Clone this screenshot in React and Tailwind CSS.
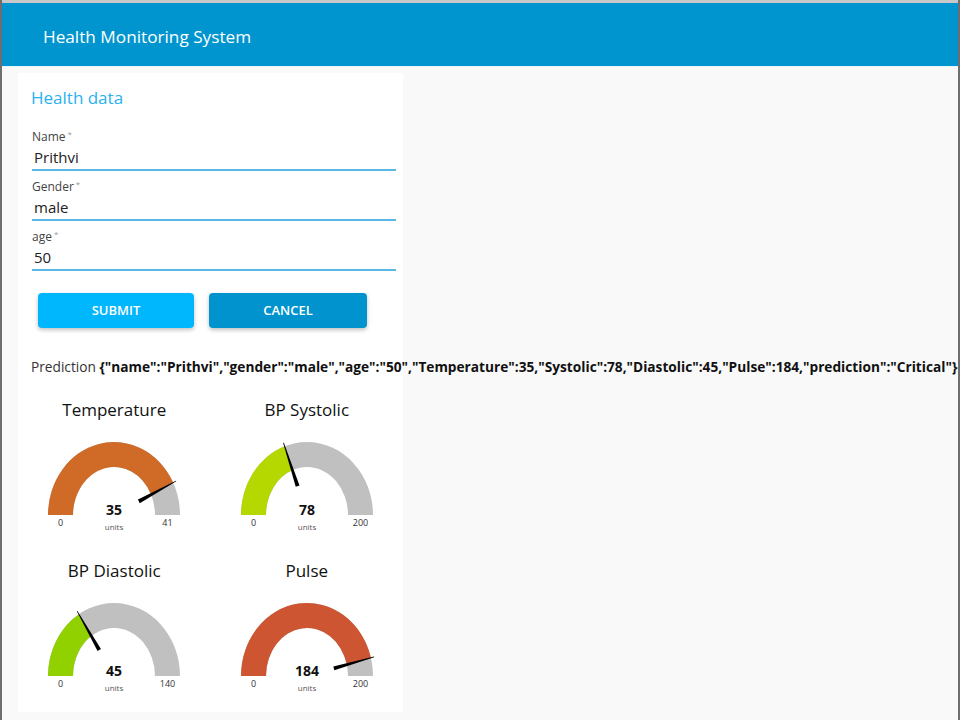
import React from 'react';

const font = { fontFamily: '"Open Sans", "Noto Sans", sans-serif' };

function pt(cx, cy, rx, ry, a) {
    return [cx + rx * Math.cos(a), cy - ry * Math.sin(a)];
}

function arcPath(cx, cy, R, r, from, to) {
    // from/to in radians, going clockwise on screen from left (PI) towards right (0)
    const [x1, y1] = pt(cx, cy, R.x, R.y, from);
    const [x2, y2] = pt(cx, cy, R.x, R.y, to);
    const [x3, y3] = pt(cx, cy, r.x, r.y, to);
    const [x4, y4] = pt(cx, cy, r.x, r.y, from);
    return `M${x1} ${y1} A${R.x} ${R.y} 0 0 1 ${x2} ${y2} L${x3} ${y3} A${r.x} ${r.y} 0 0 0 ${x4} ${y4} Z`;
}

function Gauge({ title, value, max, color }) {
    const cx = 97;
    const cy = 93;
    const R = { x: 66, y: 73 };
    const r = { x: 41, y: 48 };
    const a = Math.PI * (1 - value / max);

    // needle
    const base = pt(cx, cy, R.x * 0.42, R.y * 0.42, a);
    const tip = pt(cx, cy, R.x * 1.05, R.y * 1.05, a);
    const nx = -Math.sin(a);
    const ny = -Math.cos(a);
    const needle = [
        [base[0] + nx * 2, base[1] + ny * 2],
        [tip[0] + nx * 0.4, tip[1] + ny * 0.4],
        [tip[0] - nx * 0.4, tip[1] - ny * 0.4],
        [base[0] - nx * 2, base[1] - ny * 2],
    ].map(p => p.join(',')).join(' ');

    return (
        <div className="flex flex-col items-center">
            <div className="h-6 leading-6 text-[17px] text-[#111]">{title}</div>
            <svg width="194" height="120" viewBox="0 0 194 120">
                <path d={arcPath(cx, cy, R, r, Math.PI, 0)} fill="#c0c0c0" />
                <path d={arcPath(cx, cy, R, r, Math.PI, a)} fill={color} />
                <polygon points={needle} fill="#000" />
                <text x={cx} y="93" textAnchor="middle" fontSize="14" fontWeight="700" fill="#111" style={font}>{value}</text>
                <text x={cx} y="108" textAnchor="middle" fontSize="8" fill="#555" style={font}>units</text>
                <text x={cx - 53.5} y="104" textAnchor="middle" fontSize="9" fill="#333" style={font}>0</text>
                <text x={cx + 53.5} y="104" textAnchor="middle" fontSize="9" fill="#333" style={font}>{max}</text>
            </svg>
        </div>
    );
}

function Field({ label, value }) {
    return (
        <div className="flex flex-col">
            <div className="h-4 leading-4 text-[12px] text-[#444]">
                {label}<sup className="ml-0.5 text-[8px] text-[#999]">*</sup>
            </div>
            <div className="h-6 leading-6 text-[15px] text-[#222] pl-0.5">{value}</div>
            <div className="h-[2px] bg-[#5bb8e4]" />
        </div>
    );
}

export default function App() {
    const prediction = {
        name: 'Prithvi',
        gender: 'male',
        age: '50',
        Temperature: 35,
        Systolic: 78,
        Diastolic: 45,
        Pulse: 184,
        prediction: 'Critical',
    };

    return (
        <div className="w-[960px] h-[720px] overflow-hidden bg-[#f9f9f9] border-l-2 border-r-2 border-[#6e6e6e] flex flex-col" style={font}>
            <div className="h-[3px] bg-[#c8c8c8]" />
            <header className="h-16 bg-[#0095cf] flex items-center pl-[41px] pt-[5px] border-b border-[#e6f4fb]">
                <h1 className="text-white text-[17.2px]">Health Monitoring System</h1>
            </header>

            <div className="pt-[6px] pl-4">
                <div className="w-[385px] h-[639px] bg-white pt-[13px] pb-[9px]">
                    <h2 className="pl-[13px] h-6 leading-6 text-[17px] text-[#29b2ef]">Health data</h2>

                    <div className="mt-[19px] ml-[14px] mr-[7px] flex flex-col gap-2">
                        <Field label="Name" value="Prithvi" />
                        <Field label="Gender" value="male" />
                        <Field label="age" value="50" />
                    </div>

                    <div className="mt-[22px] ml-5 flex gap-[15px]">
                        <button className="w-[156px] h-[35px] bg-[#00b6fd] text-white text-[13px] font-semibold rounded-sm shadow-[0_2px_4px_rgba(0,0,0,0.25)]">
                            SUBMIT
                        </button>
                        <button className="w-[158px] h-[35px] bg-[#0093cd] text-white text-[13px] font-semibold rounded-sm shadow-[0_2px_4px_rgba(0,0,0,0.25)]">
                            CANCEL
                        </button>
                    </div>

                    <div className="mt-[29px] pl-[13px] h-5 leading-5 text-[13.7px] whitespace-nowrap">
                        <span className="text-[#333]">Prediction </span>
                        <span className="font-bold text-[#111]">{JSON.stringify(prediction)}</span>
                    </div>

                    <div className="mt-[21px] grid grid-cols-2 gap-y-[17px]">
                        <Gauge title="Temperature" value={35} max={41} color="#d06a27" />
                        <Gauge title="BP Systolic" value={78} max={200} color="#b4d800" />
                        <Gauge title="BP Diastolic" value={45} max={140} color="#92d100" />
                        <Gauge title="Pulse" value={184} max={200} color="#cd5531" />
                    </div>
                </div>
            </div>
        </div>
    );
}
